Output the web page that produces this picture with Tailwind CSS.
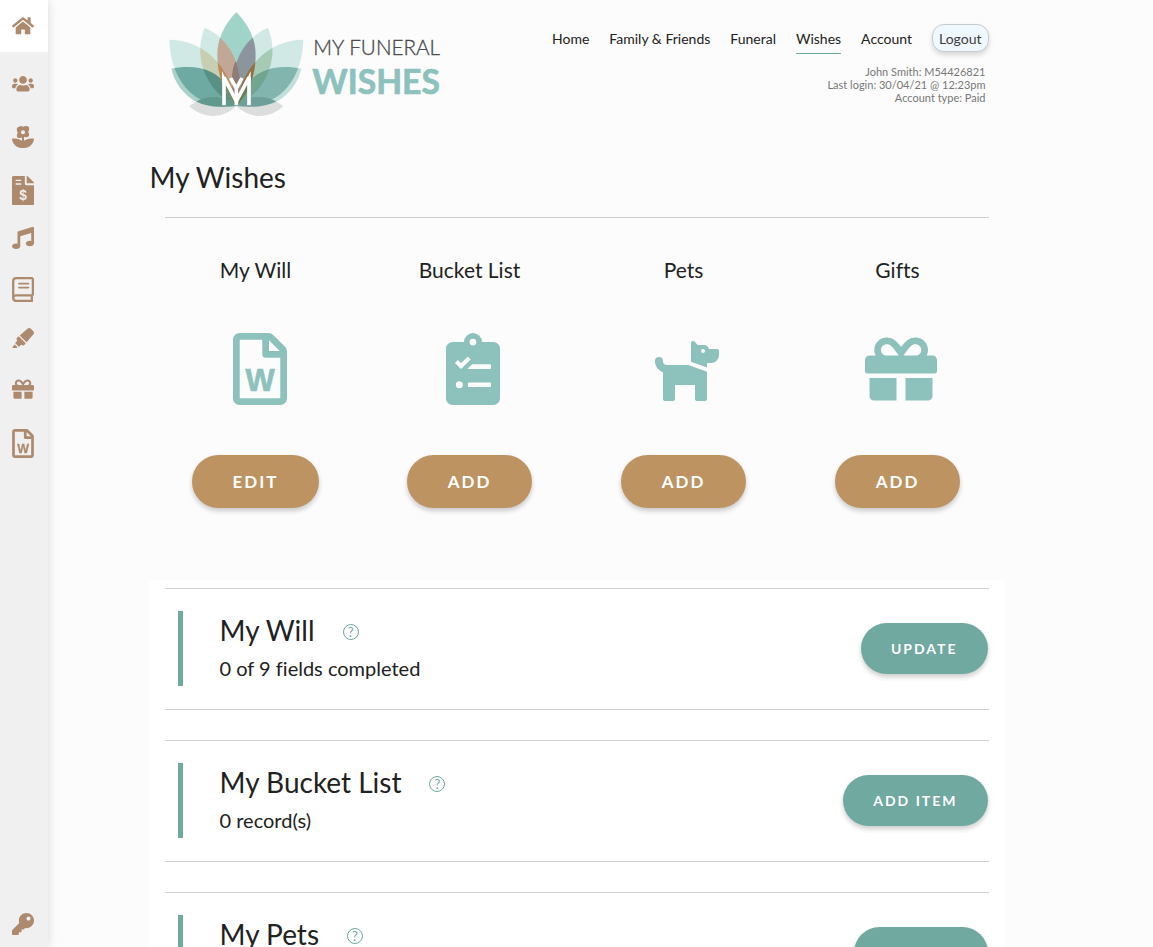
<!DOCTYPE html>
<html lang="en">

<head>
    <meta charset="UTF-8">
    <meta name="viewport" content="width=device-width, initial-scale=1.0">
    <title>My Wishes - My Funeral Wishes</title>
    <script src="https://cdn.jsdelivr.net/npm/@tailwindcss/browser@4"></script>
</head>

<body class="bg-[#fcfcfc] font-['Lato',sans-serif] text-[#212121] [font-variant-ligatures:none]">

    <!-- shared icons -->
    <svg class="hidden" aria-hidden="true">
        <symbol id="icon-gift" viewBox="0 0 512 512">
            <path d="M32 448c0 17.7 14.3 32 32 32h160V320H32v128zm256 32h160c17.7 0 32-14.3 32-32V320H288v160zm192-320h-42.1c6.2-12.1 10.1-25.5 10.1-40 0-48.5-39.5-88-88-88-41.6 0-68.5 21.3-103 68.3-34.5-47-61.4-68.3-103-68.3-48.5 0-88 39.5-88 88 0 14.5 3.8 27.9 10.1 40H32c-17.7 0-32 14.3-32 32v80c0 8.8 7.2 16 16 16h480c8.8 0 16-7.2 16-16v-80c0-17.7-14.3-32-32-32zm-326.1 0c-22.1 0-40-17.9-40-40s17.9-40 40-40c19.9 0 34.6 3.3 86.1 80h-86.1zm206.1 0h-86.1c51.4-76.5 65.7-80 86.1-80 22.1 0 40 17.9 40 40s-17.9 40-40 40z" />
        </symbol>
        <symbol id="icon-will" viewBox="0 0 384 512">
            <path d="M369.9 97.9L286 14C277 5 264.8 0 252.1 0H48C21.5 0 0 21.5 0 48v416c0 26.5 21.5 48 48 48h288c26.5 0 48-21.5 48-48V131.9c0-12.7-5.1-25-14.1-34zM332.1 128H256V51.9l76.1 76.1zM48 464V48h160v104c0 13.3 10.7 24 24 24h104v288H48z" />
            <text x="193" y="415" text-anchor="middle" font-family="Liberation Sans, sans-serif" font-weight="700" font-size="220" stroke="currentColor" stroke-width="5">W</text>
        </symbol>
    </svg>

    <!-- sidebar -->
    <nav class="fixed inset-y-0 left-0 z-10 flex w-12 flex-col bg-[#f0f0f0] text-[#ad8a6e] shadow-[0_0_10px_rgba(0,0,0,0.14)]" aria-label="Shortcuts">
        <a href="#" class="flex h-[52px] items-center justify-center bg-white pr-[2px]" aria-label="Home">
            <svg class="w-[22px]" viewBox="0 0 576 512" fill="currentColor">
                <path d="M280.37 148.26L96 300.11V464a16 16 0 0 0 16 16l112.06-.29a16 16 0 0 0 15.92-16V368a16 16 0 0 1 16-16h64a16 16 0 0 1 16 16v95.64a16 16 0 0 0 16 16.05L464 480a16 16 0 0 0 16-16V300L295.67 148.26a12.19 12.19 0 0 0-15.3 0zM571.6 251.47L488 182.56V44.05a12 12 0 0 0-12-12h-56a12 12 0 0 0-12 12v72.61L318.47 43a48 48 0 0 0-61 0L4.34 251.47a12 12 0 0 0-1.6 16.9l25.5 31A12 12 0 0 0 45.15 301l235.22-193.74a12.19 12.19 0 0 1 15.3 0L530.9 301a12 12 0 0 0 16.9-1.6l25.5-31a12 12 0 0 0-1.7-16.93z" />
            </svg>
        </a>
        <div class="mt-[23px] grid h-[404px] auto-rows-fr justify-items-center pr-[2px]">
            <a href="#" aria-label="Family and friends">
                <svg class="w-[22px]" viewBox="0 0 640 512" fill="currentColor">
                    <path d="M96 224c35.3 0 64-28.7 64-64s-28.7-64-64-64-64 28.7-64 64 28.7 64 64 64zm448 0c35.3 0 64-28.7 64-64s-28.7-64-64-64-64 28.7-64 64 28.7 64 64 64zm32 32h-64c-17.6 0-33.5 7.1-45.1 18.6 40.3 22.1 68.9 62 75.1 109.4h66c17.7 0 32-14.3 32-32v-32c0-35.3-28.7-64-64-64zm-256 0c61.9 0 112-50.1 112-112S381.9 32 320 32 208 82.1 208 144s50.1 112 112 112zm76.8 32h-8.3c-20.8 10-43.9 16-68.5 16s-47.6-6-68.5-16h-8.3C179.6 288 128 339.6 128 403.2V432c0 26.5 21.5 48 48 48h288c26.5 0 48-21.5 48-48v-28.8c0-63.6-51.6-115.2-115.2-115.2zm-223.7-13.4C161.5 263.1 145.6 256 128 256H64c-35.3 0-64 28.7-64 64v32c0 17.7 14.3 32 32 32h65.9c6.3-47.4 34.9-87.3 75.2-109.4z" />
                </svg>
            </a>
            <a href="#" aria-label="Funeral">
                <svg class="w-[22px]" viewBox="0 0 512 512" fill="currentColor">
                    <path fill-rule="evenodd" d="M176 0c32 0 60 4 80 20 20-16 48-20 80-20 40 0 68 30 64 66-2 30-10 50-24 72 14 22 22 40 24 62 4 34-24 60-60 60-20 0-36-4-60-12v97c40-35 97-57 161-57h55c9 0 17 7 16 16-12 116-108 208-224 208h-64C108 512 12 420 0 304c-1-9 7-16 16-16h55c64 0 121 22 161 57v-77c-24 8-40 12-60 12-36 0-64-26-60-60 2-22 10-40 24-62-14-22-22-42-24-72-4-36 24-66 64-66zm80 96a48 48 0 1 0 0 96 48 48 0 0 0 0-96z" />
                </svg>
            </a>
            <a href="#" aria-label="Finances">
                <svg class="w-[22px]" viewBox="0 0 384 512">
                    <path fill="currentColor" d="M224 0v136c0 13 11 24 24 24h136v328c0 13-11 24-24 24H24c-13 0-24-11-24-24V24C0 11 11 0 24 0h200zm32 0h6c6 0 13 3 17 7l98 98c4 4 7 11 7 17v6H256V0z" />
                    <path stroke="#f0f0f0" stroke-width="24" stroke-linecap="round" d="M72 76h80M72 140h80" />
                    <text x="192" y="424" text-anchor="middle" font-family="Liberation Sans, sans-serif" font-weight="700" font-size="240" fill="#f0f0f0">$</text>
                </svg>
            </a>
            <a href="#" aria-label="Music">
                <svg class="w-[22px]" viewBox="0 0 512 512" fill="currentColor">
                    <path d="M470.38 1.51L150.41 96A32 32 0 0 0 128 126.51v261.41A139 139 0 0 0 96 384c-53 0-96 28.66-96 64s43 64 96 64 96-28.66 96-64V214.32l256-75v184.61a138.4 138.4 0 0 0-32-3.93c-53 0-96 28.66-96 64s43 64 96 64 96-28.65 96-64V32a32 32 0 0 0-41.62-30.49z" />
                </svg>
            </a>
            <a href="#" aria-label="Readings">
                <svg class="w-[22px]" viewBox="0 0 448 512" fill="none" stroke="currentColor">
                    <path stroke-width="46" stroke-linejoin="round" d="M425 24H88c-36 0-64 28-64 64v336c0 36 28 64 64 64h337M425 24v352M425 376H88c-34 0-62 20-64 48M404 376v112" />
                    <path stroke-width="34" stroke-linecap="round" d="M140 134h196M140 216h196" />
                </svg>
            </a>
            <a href="#" aria-label="Notes">
                <svg class="w-[22px]" viewBox="0 0 544 512" fill="currentColor">
                    <path d="M0 479.98L99.92 512l35.45-35.45-67.04-67.04L0 479.98zm124.61-240.01a36.592 36.592 0 0 0-10.79 38.1l13.05 42.83-50.93 50.94 96.23 96.23 50.86-50.86 42.74 13.08c13.73 4.2 28.65-.01 38.15-10.78l35.55-41.64-173.34-173.34-41.52 35.44zm403.31-160.7l-63.2-63.2c-20.49-20.49-53.38-21.52-75.12-2.35L190.55 183.68l169.77 169.78L530.27 154.4c19.18-21.74 18.15-54.63-2.35-75.13z" />
                </svg>
            </a>
            <a href="#" aria-label="Gifts">
                <svg class="size-[22px]" fill="currentColor"><use href="#icon-gift" /></svg>
            </a>
            <a href="#" aria-label="My will">
                <svg class="h-[29px] w-[22px]" fill="currentColor"><use href="#icon-will" /></svg>
            </a>
        </div>
        <a href="#" class="mt-auto mb-3 flex justify-center pr-[2px]" aria-label="Change password">
            <svg class="w-[22px]" viewBox="0 0 512 512" fill="currentColor">
                <path d="M512 176.001C512 273.203 433.202 352 336 352c-11.22 0-22.19-1.062-32.827-3.069l-24.012 27.014A23.999 23.999 0 0 1 261.223 384H224v40c0 13.255-10.745 24-24 24h-40v40c0 13.255-10.745 24-24 24H24c-13.255 0-24-10.745-24-24v-78.059c0-6.365 2.529-12.47 7.029-16.971l161.802-161.802C163.108 213.814 160 195.271 160 176 160 78.798 238.797.001 335.999 0 433.488-.001 512 78.511 512 176.001zM336 128c0 26.51 21.49 48 48 48s48-21.49 48-48-21.49-48-48-48-48 21.49-48 48z" />
            </svg>
        </a>
    </nav>

    <div class="mx-auto max-w-[856px]">
        <header class="flex items-start justify-between pr-4 pl-5">
            <a href="#" class="mt-3" aria-label="My Funeral Wishes">
                <svg class="w-[272px]" viewBox="56 36 816 312">
                    <defs>
                        <path id="top" d="M258 37C220 75 201 120 201 165C201 230 225 285 258 318C291 285 316 230 316 165C316 120 296 75 258 37Z" />
                        <path id="mid" d="M163 83C150 115 146 150 153 185C164 240 200 290 258 318C275 275 272 215 250 168C232 130 202 100 163 83Z" />
                        <path id="outer" d="M57 119C58 170 72 220 105 262C143 307 200 322 258 318C252 260 225 205 180 165C145 135 103 119 57 119Z" />
                        <path id="low" d="M63 206C72 245 97 282 133 302C172 322 215 323 258 318C250 275 222 235 180 215C142 198 102 198 63 206Z" />
                        <path id="base" d="M117 319C140 300 165 291 190 291C220 291 245 302 258 318C238 337 213 348 188 348C162 348 138 338 117 319Z" />
                        <clipPath id="clip-top"><use href="#top" /></clipPath>
                        <clipPath id="clip-mid"><use href="#mid" /></clipPath>
                        <clipPath id="clip-outer"><use href="#outer" /></clipPath>
                        <clipPath id="clip-low"><use href="#low" /></clipPath>
                    </defs>
                    <!-- right half of the lotus -->
                    <g transform="matrix(-1 0 0 1 516 0)">
                        <use href="#base" fill="#dcdddd" />
                        <use href="#outer" fill="#d0e9e4" />
                        <use href="#mid" fill="#d0e9e4" />
                        <use href="#mid" fill="#a6cbb5" clip-path="url(#clip-outer)" />
                        <use href="#low" fill="#c3dfdc" />
                        <use href="#low" fill="#81b5ad" clip-path="url(#clip-outer)" />
                        <use href="#low" fill="#72a58f" clip-path="url(#clip-mid)" />
                        <use href="#base" fill="#6e9f98" clip-path="url(#clip-low)" />
                    </g>
                    <!-- left half -->
                    <use href="#base" fill="#dcdddd" />
                    <use href="#outer" fill="#d0e9e4" />
                    <use href="#mid" fill="#d0e9e4" />
                    <use href="#mid" fill="#c7ceb1" clip-path="url(#clip-outer)" />
                    <use href="#low" fill="#a9d1ca" />
                    <use href="#low" fill="#6eaaa1" clip-path="url(#clip-outer)" />
                    <use href="#low" fill="#589084" clip-path="url(#clip-mid)" />
                    <use href="#base" fill="#62998f" clip-path="url(#clip-low)" />
                    <!-- centre petal and where the side petals cross it -->
                    <use href="#top" fill="#a1d4c8" />
                    <g clip-path="url(#clip-top)">
                        <use href="#mid" fill="#c3a796" />
                        <g transform="matrix(-1 0 0 1 516 0)">
                            <use href="#mid" fill="#8c959d" />
                            <use href="#outer" fill="#94713d" />
                        </g>
                        <use href="#outer" fill="#bd8a58" />
                        <g clip-path="url(#clip-mid)">
                            <path fill="#8f7c74" d="M258 180C240 210 240 260 258 318L290 250Z" />
                        </g>
                        <use href="#low" fill="#6f8a68" />
                        <use href="#low" fill="#668158" transform="matrix(-1 0 0 1 516 0)" />
                    </g>
                    <g fill="none" stroke="#fff" stroke-width="11">
                        <path d="M221 316V232L258 304L296 232V316" />
                        <path d="M241 234L258 266L275 234M258 262V316" />
                        <path stroke="none" fill="#fff" d="M215 213L230 245H215ZM301 213L286 245H301Z" />
                    </g>
                    <text x="489" y="165" font-family="Lato, sans-serif" font-weight="300" font-size="62" fill="#4b4b4d" stroke="#4b4b4d" stroke-width="1">MY FUNERAL</text>
                    <text x="486" y="281" font-family="Lato, sans-serif" font-weight="700" font-size="101" fill="#8dc1bc" stroke="#8dc1bc" stroke-width="2">WISHES</text>
                </svg>
            </a>

            <div class="mt-6">
                <nav class="flex items-start gap-5 text-sm" aria-label="Main">
                    <a href="#" class="pt-[5px]">Home</a>
                    <a href="#" class="pt-[5px]">Family &amp; Friends</a>
                    <a href="#" class="pt-[5px]">Funeral</a>
                    <a href="#" class="border-b border-[#6ea99f] pt-[5px] pb-1" aria-current="page">Wishes</a>
                    <a href="#" class="pt-[5px]">Account</a>
                    <button type="button" class="h-7 cursor-pointer rounded-xl border border-[#c8cbce] bg-[#f0f8ff] px-[6px] pt-px text-[#3c3c3c] shadow-[0_3px_5px_rgba(0,0,0,0.15)]">Logout</button>
                </nav>
                <div class="mt-[11px] pr-[3px] text-right text-[11px] leading-[13px] text-[#777]">
                    <p>John Smith: M54426821</p>
                    <p>Last login: 30/04/21 @ 12:23pm</p>
                    <p>Account type: Paid</p>
                </div>
            </div>
        </header>

        <main>
            <h1 class="mt-[41px] pl-px text-[28px] leading-10">My Wishes</h1>
            <hr class="mx-4 mt-5 border-[#cfd1d1]">

            <section class="mt-9 grid grid-cols-4 text-center">
                <div>
                    <h2 class="text-[21px] leading-8">My Will</h2>
                    <div class="mt-[47px] flex h-[72px] items-center justify-center pl-2 text-[#8dc1bc]">
                        <svg class="h-[72px] w-[54px]" fill="currentColor"><use href="#icon-will" /></svg>
                    </div>
                    <button type="button" class="mt-[50px] h-[53px] cursor-pointer rounded-full bg-[#bd9361] px-[41px] text-[17px] font-bold tracking-[2px] text-white shadow-[0_3px_5px_rgba(0,0,0,0.2)]">EDIT</button>
                </div>
                <div>
                    <h2 class="text-[21px] leading-8">Bucket List</h2>
                    <div class="mt-[47px] flex h-[72px] items-center justify-center pl-[7px] text-[#8dc1bc]">
                        <svg class="h-[72px] w-[54px]" viewBox="0 0 384 512">
                            <path fill="currentColor" fill-rule="evenodd" d="M336 64h-80a64 64 0 0 0-128 0H48C21.500 64 0 85.500 0 112v352c0 26.500 21.500 48 48 48h288c26.500 0 48-21.500 48-48V112c0-26.500-21.500-48-48-48zM192 40a24 24 0 1 1 0 48 24 24 0 0 1 0-48z" />
                            <g fill="#fcfcfc">
                                <path d="M186 222h126c4 0 8 4 8 8v18c0 4-4 8-8 8H152zM164 352h148c4 0 8 4 8 8v16c0 4-4 8-8 8H164c-4 0-8-4-8-8v-16c0-4 4-8 8-8z" />
                                <circle cx="95" cy="368" r="25" />
                            </g>
                            <path fill="none" stroke="#fcfcfc" stroke-width="30" d="M74 203L107 235L166 178" />
                        </svg>
                    </div>
                    <button type="button" class="mt-[50px] h-[53px] cursor-pointer rounded-full bg-[#bd9361] px-[41px] text-[17px] font-bold tracking-[2px] text-white shadow-[0_3px_5px_rgba(0,0,0,0.2)]">ADD</button>
                </div>
                <div>
                    <h2 class="text-[21px] leading-8">Pets</h2>
                    <div class="mt-[47px] flex h-[72px] items-center justify-center pl-[7px] text-[#8dc1bc]">
                        <svg class="w-[72px]" viewBox="0 0 576 512" fill="currentColor">
                            <path d="M298.06,224,448,277.55V496a16,16,0,0,1-16,16H368a16,16,0,0,1-16-16V384H192V496a16,16,0,0,1-16,16H112a16,16,0,0,1-16-16V282.09C58.84,268.84,32,233.66,32,192a32,32,0,0,1,64,0,32.06,32.06,0,0,0,32,32ZM544,112v32a64,64,0,0,1-64,64H448v35.58L320,197.87V48c0-14.25,17.22-21.39,27.31-11.31L374.59,64h53.63c10.91,0,23.75,7.92,28.62,17.69L464,96h64A16,16,0,0,1,544,112Zm-112,0a16,16,0,1,0-16,16A16,16,0,0,0,432,112Z" />
                        </svg>
                    </div>
                    <button type="button" class="mt-[50px] h-[53px] cursor-pointer rounded-full bg-[#bd9361] px-[41px] text-[17px] font-bold tracking-[2px] text-white shadow-[0_3px_5px_rgba(0,0,0,0.2)]">ADD</button>
                </div>
                <div>
                    <h2 class="text-[21px] leading-8">Gifts</h2>
                    <div class="mt-[47px] flex h-[72px] items-center justify-center pl-[7px] text-[#8dc1bc]">
                        <svg class="size-[72px]" fill="currentColor"><use href="#icon-gift" /></svg>
                    </div>
                    <button type="button" class="mt-[50px] h-[53px] cursor-pointer rounded-full bg-[#bd9361] px-[41px] text-[17px] font-bold tracking-[2px] text-white shadow-[0_3px_5px_rgba(0,0,0,0.2)]">ADD</button>
                </div>
            </section>

            <div class="mt-[72px] space-y-[30px] bg-white px-4 pt-2 pb-8">
                <section class="flex items-center justify-between border-y border-[#cfd1d1] pt-[22px] pr-px pb-[23px] pl-[13px]">
                    <div class="h-[75px] border-l-5 border-[#6fa99f] pl-[37px]">
                        <div class="flex items-center gap-7">
                            <h2 class="text-[28px] leading-[38px]">My Will</h2>
                            <button type="button" class="mt-1 flex size-4 cursor-pointer items-center justify-center rounded-full border border-[#6fa99f] text-[13px] leading-none text-[#6fa99f]" aria-label="Help with my will">?</button>
                        </div>
                        <p class="mt-[5px] text-xl leading-7">0 of 9 fields completed</p>
                    </div>
                    <button type="button" class="h-[51px] cursor-pointer rounded-full bg-[#6fa99f] px-[30px] text-sm font-bold tracking-[2px] text-white shadow-[0_3px_5px_rgba(0,0,0,0.2)]">UPDATE</button>
                </section>

                <section class="flex items-center justify-between border-y border-[#cfd1d1] pt-[22px] pr-px pb-[23px] pl-[13px]">
                    <div class="h-[75px] border-l-5 border-[#6fa99f] pl-[37px]">
                        <div class="flex items-center gap-7">
                            <h2 class="text-[28px] leading-[38px]">My Bucket List</h2>
                            <button type="button" class="mt-1 flex size-4 cursor-pointer items-center justify-center rounded-full border border-[#6fa99f] text-[13px] leading-none text-[#6fa99f]" aria-label="Help with my bucket list">?</button>
                        </div>
                        <p class="mt-[5px] text-xl leading-7">0 record(s)</p>
                    </div>
                    <button type="button" class="h-[51px] cursor-pointer rounded-full bg-[#6fa99f] px-[30px] text-sm font-bold tracking-[2px] text-white shadow-[0_3px_5px_rgba(0,0,0,0.2)]">ADD ITEM</button>
                </section>

                <section class="flex items-center justify-between border-y border-[#cfd1d1] pt-[22px] pr-px pb-[23px] pl-[13px]">
                    <div class="h-[75px] border-l-5 border-[#6fa99f] pl-[37px]">
                        <div class="flex items-center gap-7">
                            <h2 class="text-[28px] leading-[38px]">My Pets</h2>
                            <button type="button" class="mt-1 flex size-4 cursor-pointer items-center justify-center rounded-full border border-[#6fa99f] text-[13px] leading-none text-[#6fa99f]" aria-label="Help with my pets">?</button>
                        </div>
                        <p class="mt-[5px] text-xl leading-7">0 record(s)</p>
                    </div>
                    <button type="button" class="h-[51px] cursor-pointer rounded-full bg-[#6fa99f] px-[30px] text-sm font-bold tracking-[2px] text-white shadow-[0_3px_5px_rgba(0,0,0,0.2)]">ADD PET</button>
                </section>
            </div>
        </main>
    </div>

</body>

</html>
